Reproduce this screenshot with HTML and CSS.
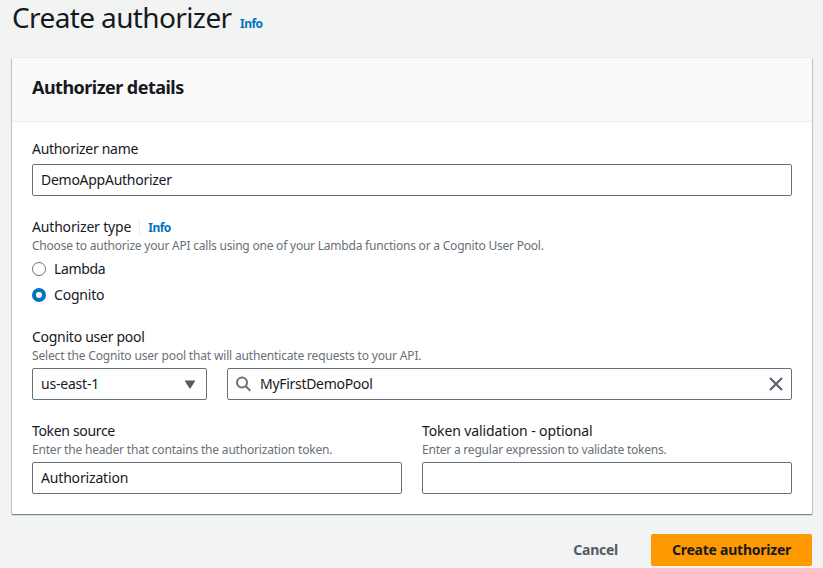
FILE: index.html
```html
<!DOCTYPE html>
<html lang="en">
<head>
<meta charset="utf-8">
<title>Create authorizer</title>
<link rel="stylesheet" href="styles.css">
</head>
<body>
<main class="page">
  <header class="page-header">
    <h1><span class="t-title">Create authorizer</span></h1>
    <a class="info info-title">Info</a>
  </header>
  <section class="panel">
    <div class="panel-header"><h2><span class="t-details">Authorizer details</span></h2></div>
    <div class="panel-body">
      <div class="field">
        <div class="label"><span class="t-name">Authorizer name</span></div>
        <div class="input"><span class="t-demo">DemoAppAuthorizer</span></div>
      </div>
      <div class="field type-field">
        <div class="label"><span class="t-type">Authorizer type</span><a class="info info-type">Info</a></div>
        <div class="hint"><span class="t-hint1">Choose to authorize your API calls using one of your Lambda functions or a Cognito User Pool.</span></div>
        <div class="radio"><span class="dot"></span><span class="t-lambda">Lambda</span></div>
        <div class="radio"><span class="dot checked"></span><span class="t-cognito">Cognito</span></div>
      </div>
      <div class="field">
        <div class="label"><span class="t-pool">Cognito user pool</span></div>
        <div class="hint"><span class="t-hint2">Select the Cognito user pool that will authenticate requests to your API.</span></div>
        <div class="pool-row">
          <div class="input select"><span class="t-region">us-east-1</span>
            <svg width="12" height="9" viewBox="0 0 12 9"><path d="M1.5 1h9L6 8z" fill="#545b64" stroke="#545b64" stroke-width="1.2" stroke-linejoin="round"/></svg>
          </div>
          <div class="input search">
            <svg width="16" height="16" viewBox="0 0 16 16" fill="none" stroke="#687078" stroke-width="2"><circle cx="6" cy="6.5" r="5"/><path d="M9.7 10.2l4.6 4.6"/></svg>
            <span class="search-value"><span class="t-first">MyFirstDemoPool</span></span>
            <svg width="16" height="16" viewBox="0 0 16 16" fill="none" stroke="#545b64" stroke-width="2"><path d="M2 2l12 12M14 2L2 14"/></svg>
          </div>
        </div>
      </div>
      <div class="columns">
        <div class="field">
          <div class="label"><span class="t-source">Token source</span></div>
          <div class="hint"><span class="t-hint3">Enter the header that contains the authorization token.</span></div>
          <div class="input"><span class="t-auth">Authorization</span></div>
        </div>
        <div class="field">
          <div class="label"><span class="t-valid">Token validation - optional</span></div>
          <div class="hint"><span class="t-hint4">Enter a regular expression to validate tokens.</span></div>
          <div class="input"></div>
        </div>
      </div>
    </div>
  </section>
  <footer class="actions">
    <span class="cancel"><span class="t-cancel">Cancel</span></span>
    <span class="submit"><span class="t-create">Create authorizer</span></span>
  </footer>
</main>
</body>
</html>
```
FILE: styles.css
```css
* { box-sizing: border-box; }
body { margin: 0; height: 568px; overflow: hidden; background: #f2f3f3; color: #16191f; font: 14px/22px "Noto Sans", "Open Sans", sans-serif; }
h1, h2 { margin: 0; font-weight: 400; }
.page { padding: 0 11px 0 12px; }
.page-header { display: flex; height: 58px; }
h1 { font-size: 28px; line-height: 34px; width: 228px; white-space: nowrap; }
.info { color: #0073bb; font-size: 12px; font-weight: 700; letter-spacing: -.5px; }
.info-title { padding-top: 13px; }
.panel { height: 456px; background: #fff; box-shadow: 0 1px 1px rgba(0,28,36,.3), 1px 1px 1px rgba(0,28,36,.15), -1px 1px 1px rgba(0,28,36,.15), 0 -1px 0 #eaeded; }
.panel-header { height: 64px; padding: 18px 20px; background: #fafafa; border-bottom: 1px solid #eaeded; }
h2 { font-size: 18px; font-weight: 700; line-height: 22px; }
.panel-body { display: flex; flex-direction: column; gap: 20px; padding: 16px 20px; }
.label { display: flex; height: 22px; white-space: nowrap; }
.hint { height: 16px; color: #687078; font-size: 12px; line-height: 16px; white-space: nowrap; }
.input { display: flex; align-items: center; height: 32px; padding: 0 8px; border: 1px solid #687078; border-radius: 2px; background: #fff; }
.field > .label + .input { margin-top: 4px; }
.type-field { height: 90px; }
.info-type { height: 16px; margin: 3px 0 0 8px; padding-left: 8px; border-left: 1px solid #eaeded; line-height: 18px; }
.radio { display: flex; align-items: center; gap: 8px; height: 22px; margin-top: 4px; }
.dot { width: 14px; height: 14px; border: 1px solid #687078; border-radius: 50%; background: #fff; }
.dot.checked { border: 4px solid #0073bb; }
.pool-row, .columns { display: grid; gap: 20px; }
.pool-row { grid-template-columns: 175px 1fr; margin-top: 4px; }
.columns { grid-template-columns: 1fr 1fr; }
.columns .input { margin-top: 4px; }
.select { justify-content: space-between; padding-right: 10px; }
.search { padding: 0 7px 0 8px; }
.search-value { flex: 1; padding-left: 8px; }
.actions { display: flex; justify-content: flex-end; margin-top: 20px; line-height: 32px; font-weight: 700; }
.cancel { margin-right: 33px; color: #545b64; }
.submit { width: 161px; height: 32px; border-radius: 2px; background: #f90; text-align: center; }

/* Tracking per text run */
.t-title { letter-spacing: -.62px; }
.t-details { letter-spacing: -.53px; }
.t-name { letter-spacing: -.3px; }
.t-demo { letter-spacing: -.27px; }
.t-type { letter-spacing: -.17px; }
.t-hint1 { letter-spacing: -.217px; }
.t-lambda { letter-spacing: -.33px; }
.t-cognito { letter-spacing: -.2px; }
.t-pool { letter-spacing: -.27px; }
.t-hint2 { letter-spacing: -.165px; }
.t-region { letter-spacing: -.2px; }
.t-first { letter-spacing: -.3px; }
.t-source { letter-spacing: -.33px; }
.t-hint3 { letter-spacing: -.19px; }
.t-auth { letter-spacing: -.17px; }
.t-valid { letter-spacing: -.11px; }
.t-hint4 { letter-spacing: -.22px; }
.t-cancel { letter-spacing: -.25px; }
.t-create { letter-spacing: -.23px; }
```
